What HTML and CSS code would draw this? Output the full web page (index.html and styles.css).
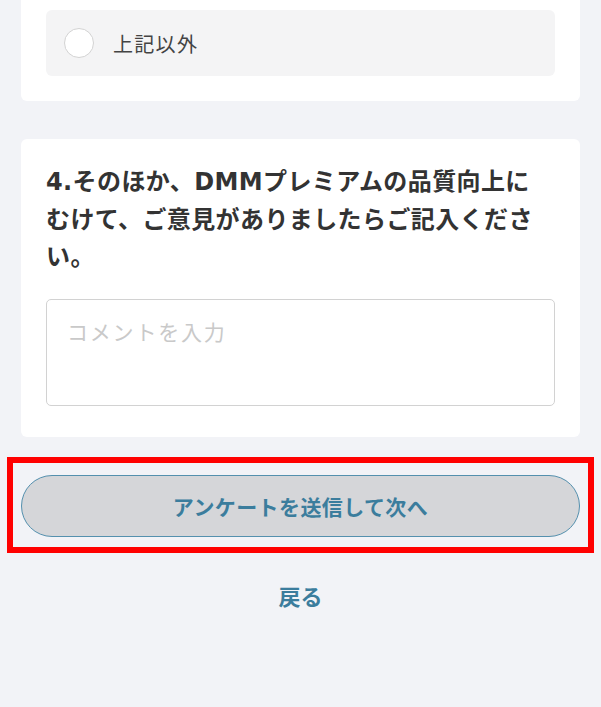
FILE: index.html
```html
<!DOCTYPE html>
<html lang="ja">
<head>
<meta charset="utf-8">
<link rel="stylesheet" href="styles.css">
</head>
<body>
<main class="page">
  <section class="card card-top">
    <label class="option">
      <span class="radio"></span>
      <span class="option-label">上記以外</span>
    </label>
  </section>

  <section class="card card-question">
    <p class="question">4.そのほか、DMMプレミアムの品質向上にむけて、ご意見がありましたらご記入ください。</p>
    <div class="textarea"><span class="placeholder">コメントを入力</span></div>
  </section>

  <div class="highlight">
    <button class="submit" type="button">アンケートを送信して次へ</button>
  </div>

  <a class="back" href="#">戻る</a>
</main>
</body>
</html>
```

FILE: styles.css
```css
html, body {
  margin: 0;
  padding: 0;
  background: #f2f3f7;
}

body {
  font-family: "Liberation Sans", "Noto Sans CJK JP", sans-serif;
  color: #333;
}

.page {
  display: flex;
  flex-direction: column;
  padding: 0 21px;
  min-height: 707px;
  box-sizing: border-box;
}

.card {
  background: #fff;
  border-radius: 6px;
  padding: 25px;
}

.card-top {
  border-radius: 0 0 6px 6px;
  padding: 10px 25px 25px;
}

.option {
  display: flex;
  align-items: center;
  height: 66px;
  padding: 0 18px;
  background: #f4f4f5;
  border-radius: 6px;
  gap: 19px;
}

.radio {
  width: 30px;
  height: 30px;
  box-sizing: border-box;
  border: 1.5px solid #d3d3d3;
  border-radius: 50%;
  background: #fff;
  flex: none;
}

.option-label {
  font-family: "Noto Sans CJK JP", sans-serif;
  font-size: 20px;
  letter-spacing: 1.3px;
  color: #444;
}

.card-question {
  margin-top: 38px;
  padding: 25px 25px 31px;
}

.question {
  margin: 0;
  padding-right: 12px;
  font-family: "DejaVu Sans", "Noto Sans CJK JP", sans-serif;
  font-size: 24px;
  font-weight: 700;
  line-height: 37.5px;
  letter-spacing: 0.4px;
  color: #333;
}

.textarea {
  margin-top: 22px;
  height: 107px;
  box-sizing: border-box;
  border: 1.5px solid #d2d2d2;
  border-radius: 5px;
  padding: 15px 20px;
}

.placeholder {
  font-family: "Noto Sans CJK JP", sans-serif;
  font-size: 21px;
  line-height: 33px;
  letter-spacing: 1.8px;
  color: #c9c9c9;
}

.highlight {
  margin: 20px -14px 0;
  border: 6px solid #ff0000;
  padding: 12px 8px 10px;
}

.submit {
  display: block;
  width: 100%;
  height: 62px;
  border: 1.5px solid #5490ae;
  border-radius: 31px;
  background: #d5d6d9;
  font-family: "Noto Sans CJK JP", sans-serif;
  font-size: 21px;
  font-weight: 700;
  letter-spacing: 0.4px;
  color: #3b7d9d;
  cursor: pointer;
}

.back {
  align-self: center;
  margin-top: 27px;
  font-family: "Noto Sans CJK JP", sans-serif;
  font-size: 22px;
  font-weight: 700;
  line-height: 30px;
  color: #3b7d9d;
  text-decoration: none;
}
```
